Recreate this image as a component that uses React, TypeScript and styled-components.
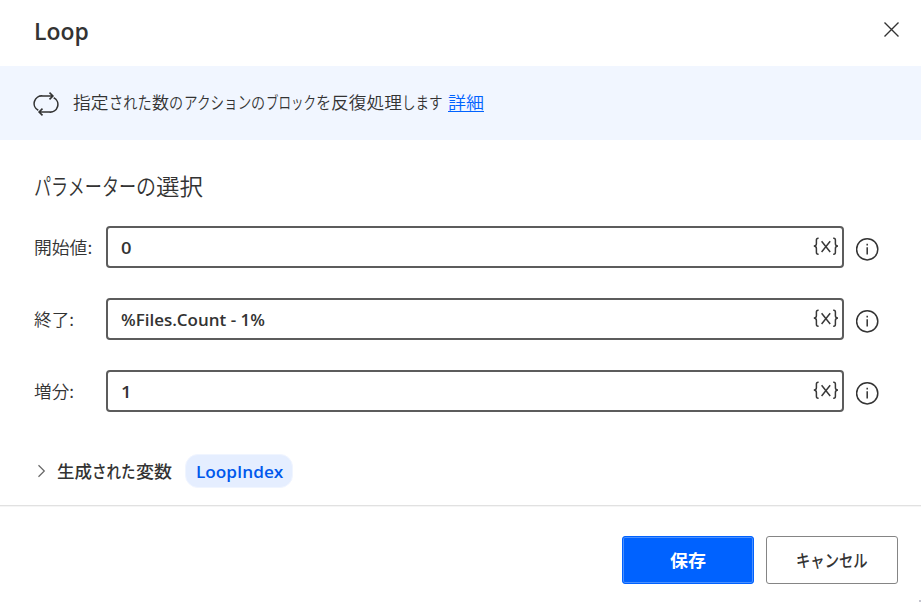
import React, { useLayoutEffect, useRef, useState } from "react";
import styled, { createGlobalStyle } from "styled-components";

const Global = createGlobalStyle`
  * { box-sizing: border-box; }
  body { margin: 0; background: #fff; overflow: hidden; }
`;

const Dialog = styled.div`
  width: 921px;
  height: 602px;
  display: flex;
  flex-direction: column;
  background: #fff;
  color: #333;
  font: 400 17.5px/24px "Noto Sans", "Noto Sans CJK JP", sans-serif;
  white-space: nowrap;
  position: relative;
  overflow: hidden;
`;

const Header = styled.header`
  height: 66px;
  display: flex;
  justify-content: space-between;
  align-items: flex-start;
  padding: 16px 21px 0 34px;
`;

const Title = styled.h1`
  margin: 0;
  font: 600 22.5px/32px "Open Sans", sans-serif;
`;

const CloseButton = styled.button`
  border: 0;
  padding: 0;
  margin-top: 5px;
  width: 17px;
  height: 17px;
  background: none;
  color: #333;
  svg { display: block; }
`;

const Banner = styled.section`
  height: 74px;
  display: flex;
  align-items: center;
  background: #f1f6ff;
  padding: 0 34px 0 33px;
`;

const BannerIcon = styled.svg`
  margin: 2px 15px 0 0;
  flex: none;
`;

const Description = styled.p`
  margin: 0 0 2px -1px;
  display: flex;
  font: 350 17.5px/24px "Noto Sans CJK JP", sans-serif;
`;

const Link = styled.a`
  margin-left: 5px;
  color: #0062ff;
  height: 22px;
  line-height: 24px;
  border-bottom: 1px solid #0062ff;
`;

const Body = styled.main`
  height: 365px;
  padding: 29px 42px 0 34px;
`;

const SectionTitle = styled.h2`
  margin: 0 0 25px;
  display: flex;
  font: 350 23px/32px "Noto Sans CJK JP", sans-serif;
`;

const FieldRow = styled.div`
  height: 42px;
  margin-bottom: 30px;
  display: grid;
  grid-template-columns: 72px 738px 23px;
  align-items: center;
`;

const FieldLabel = styled.label`
  display: flex;
  font: 350 17.2px/24px "Noto Sans CJK JP", sans-serif;
`;

const InputBox = styled.div`
  height: 42px;
  display: flex;
  align-items: center;
  justify-content: space-between;
  border: 2px solid #5c5c5c;
  border-radius: 4px;
  padding: 0 3px 0 13px;
`;

const Value = styled.span`
  font: 600 16.5px/24px "Open Sans", sans-serif;
  padding-top: 2px;
`;

const InfoIcon = styled.svg`
  margin: 4px 0 0 12px;
`;

const Outputs = styled.div`
  display: flex;
  align-items: center;
  height: 34px;
  margin-top: 42px;
`;

const Chevron = styled.svg`
  margin: 0 11px 0 3px;
`;

const OutputsLabel = styled.span`
  display: flex;
  font: 500 17.5px/24px "Noto Sans CJK JP", sans-serif;
`;

const Chip = styled.span`
  margin-left: 13px;
  width: 108px;
  height: 34px;
  border: 1px solid #f0f5ff;
  border-radius: 13px;
  background: #e5eeff;
  color: #0058ec;
  display: flex;
  align-items: center;
  justify-content: center;
  padding-top: 2px;
  font: 600 17px/24px "Open Sans", sans-serif;
`;

const Footer = styled.footer`
  flex: 1;
  display: flex;
  justify-content: flex-end;
  gap: 12px;
  border-top: 1px solid #e1e1e1;
  box-shadow: inset 0 1px 0 #f5f5f5;
  padding: 30px 23px 0 0;
`;

const Button = styled.button<{ $primary?: boolean }>`
  width: 132px;
  height: 48px;
  padding: 0 ${(p) => (p.$primary ? 2 : 0)}px 1px 0;
  display: flex;
  align-items: center;
  justify-content: center;
  border: 1px solid ${(p) => (p.$primary ? "#0062ff" : "#858585")};
  border-radius: 3px;
  background: ${(p) => (p.$primary ? "#0062ff" : "#fff")};
  box-shadow: ${(p) => (p.$primary ? "inset 0 0 0 1px #4b90ff" : "none")};
  color: ${(p) => (p.$primary ? "#fff" : "#333")};
  font: ${(p) => (p.$primary ? 700 : 500)} 17.5px/24px "Noto Sans CJK JP", sans-serif;
`;

const Grip = styled.i`
  position: absolute;
  right: 0;
  bottom: 0;
  width: 2px;
  height: 2px;
  background: #c5c5cf;
`;

const Slot = styled.span<{ $width: number }>`
  display: inline-block;
  width: ${(p) => p.$width}px;
  flex: none;
`;

const Glyphs = styled.span`
  display: inline-block;
  transform-origin: 0 50%;
`;

function Fit({ w, children }: { w: number; children: string }) {
  const ref = useRef<HTMLSpanElement>(null);
  const [scale, setScale] = useState(1);
  useLayoutEffect(() => {
    if (ref.current) setScale(w / ref.current.offsetWidth);
  }, [w, children]);
  return (
    <Slot $width={w}>
      <Glyphs ref={ref} style={{ transform: `scaleX(${scale})` }}>{children}</Glyphs>
    </Slot>
  );
}

const VariableIcon = () => (
  <svg width="26" height="22" viewBox="0 0 26 22" fill="none" stroke="#383838" strokeWidth="1.5">
    <path d="M5.6 2.2H5.2Q3.4 2.2 3.4 4.1V7.7Q3.4 10 0.8 10Q3.4 10 3.4 12.4V16.2Q3.4 18.2 5.2 18.2H5.6" />
    <path d="M20.2 2.2h.6q1.6 0 1.6 1.9v3.6q0 2.3 2.6 2.3q-2.6 0-2.6 2.4v3.8q0 2-1.6 2h-.6" />
    <path d="M8.6 5.2l8.6 10.8M17.2 5.2L8.6 16" />
  </svg>
);

const fields = [
  { label: "開始値:", width: 58, value: "0", valueWidth: 10 },
  { label: "終了:", width: 40, value: "%Files.Count - 1%", valueWidth: 144 },
  { label: "増分:", width: 40, value: "1", valueWidth: 10 },
];

export default function App() {
  return (
    <Dialog>
      <Global />
      <Header>
        <Title><Fit w={55}>Loop</Fit></Title>
        <CloseButton aria-label="閉じる">
          <svg width="17" height="17" viewBox="0 0 17 17" stroke="#333" strokeWidth="1.4">
            <path d="M1.5 1.5l14 14M15.5 1.5l-14 14" />
          </svg>
        </CloseButton>
      </Header>
      <Banner>
        <BannerIcon width="26" height="26" viewBox="0 0 26 26" fill="none" stroke="#333" strokeWidth="1.6">
          <path d="M5.3 19.3A7.6 7.6 0 0 1 9.8 5H19.5M16.5 1.6L19.9 5L16.5 8.4" />
          <path d="M20.7 6.7A7.6 7.6 0 0 1 16.2 21H6.5M9.5 17.6L6.1 21L9.5 24.4" />
        </BannerIcon>
        <Description>
          <Fit w={35.5}>指定</Fit>
          <Fit w={43}>された</Fit>
          <Fit w={17.5}>数</Fit>
          <Fit w={14.5}>の</Fit>
          <Fit w={67.5}>アクション</Fit>
          <Fit w={14.5}>の</Fit>
          <Fit w={50}>ブロック</Fit>
          <Fit w={15.5}>を</Fit>
          <Fit w={71}>反復処理</Fit>
          <Fit w={41}>します</Fit>
          <Link><Fit w={36}>詳細</Fit></Link>
        </Description>
      </Banner>
      <Body>
        <SectionTitle>
          <Fit w={102}>パラメーター</Fit>
          <Fit w={20}>の</Fit>
          <Fit w={47}>選択</Fit>
        </SectionTitle>
        {fields.map((f) => (
          <FieldRow key={f.label}>
            <FieldLabel><Fit w={f.width}>{f.label}</Fit></FieldLabel>
            <InputBox>
              <Value><Fit w={f.valueWidth}>{f.value}</Fit></Value>
              <VariableIcon />
            </InputBox>
            <InfoIcon width="24" height="24" viewBox="0 0 24 24" fill="none" stroke="#333" strokeWidth="1.5">
              <circle cx="11.2" cy="12.3" r="10.6" />
              <path d="M11.2 10.2v7.2M11.2 6.8v1.8" />
            </InfoIcon>
          </FieldRow>
        ))}
        <Outputs>
          <Chevron width="9" height="14" viewBox="0 0 9 14" fill="none" stroke="#666" strokeWidth="1.2">
            <path d="M1.5 1.3L7.3 7L1.5 12.7" />
          </Chevron>
          <OutputsLabel>
            <Fit w={35}>生成</Fit>
            <Fit w={44}>された</Fit>
            <Fit w={36}>変数</Fit>
          </OutputsLabel>
          <Chip><Fit w={87}>LoopIndex</Fit></Chip>
        </Outputs>
      </Body>
      <Footer>
        <Button $primary><Fit w={36}>保存</Fit></Button>
        <Button><Fit w={72}>キャンセル</Fit></Button>
      </Footer>
      <Grip />
    </Dialog>
  );
}
